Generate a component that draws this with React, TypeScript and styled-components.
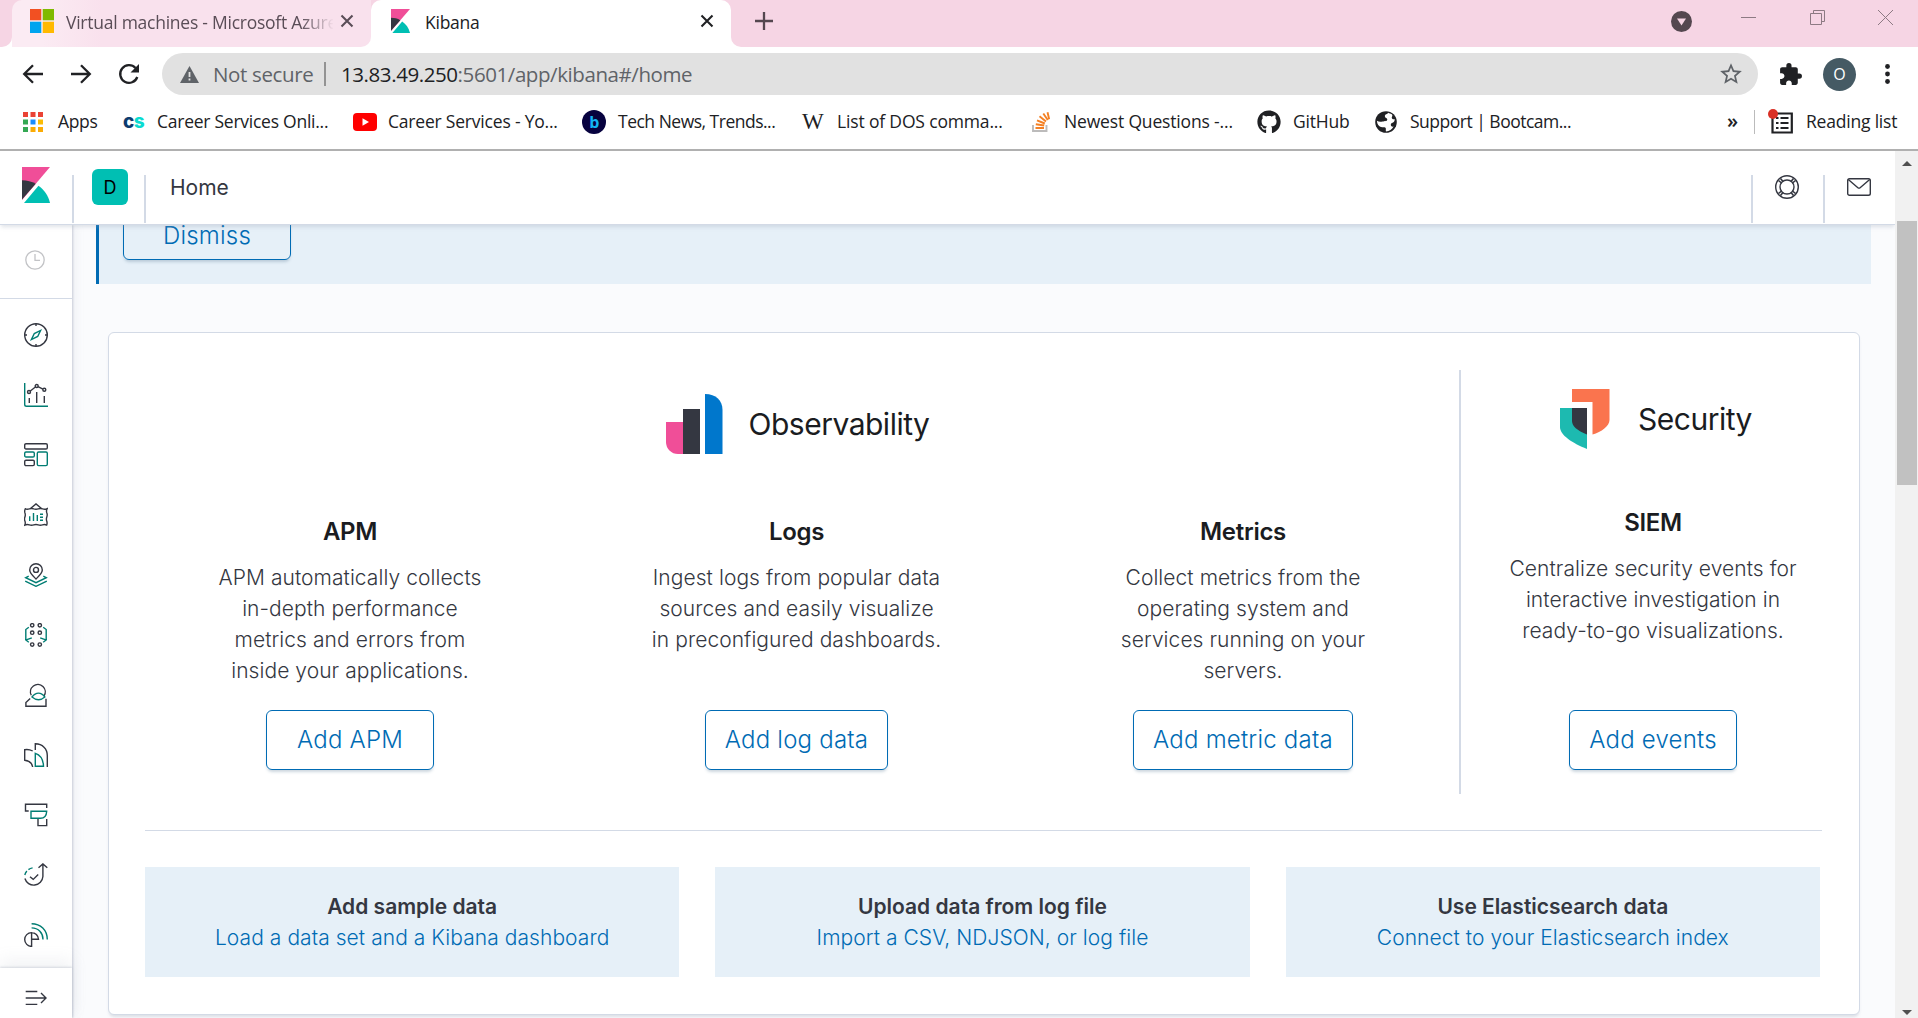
import React from "react";
import styled, { createGlobalStyle } from "styled-components";
import { FaGithub } from "react-icons/fa";
import { MdExtension, MdStarBorder } from "react-icons/md";

const INK = "#343741";
const TEAL = "#017d73";
const BLUE = "#006bb4";
const LINE = "#d3dae6";

const Global = createGlobalStyle`
  * { box-sizing: border-box; }
  body { margin: 0; overflow: hidden; background: #fff; }
  svg { display: block; flex: none; }
`;

const Screen = styled.div`
  width: 1918px;
  height: 1018px;
  display: flex;
  flex-direction: column;
  overflow: hidden;
  font-family: Inter, "Liberation Sans", sans-serif;
  color: ${INK};
`;

/* ---------- Browser chrome ---------- */

const Chrome = styled.div`
  flex: none;
  height: 151px;
  background: #fff;
  border-bottom: 2px solid #b0b0b0;
  font-family: "Open Sans", "Noto Sans", sans-serif;
  color: #202124;
`;

const TabStrip = styled.div`
  display: flex;
  height: 47px;
  background: linear-gradient(#f6d5e4 50%, #fff 50%);
`;

const StripStart = styled.div`
  width: 12px;
  background: #f6d5e4;
  border-radius: 0 0 10px 0;
`;

const Tab = styled.div<{ $active?: boolean }>`
  display: flex;
  align-items: center;
  width: ${(p) => (p.$active ? 360 : 359)}px;
  height: 47px;
  padding: 0 17px 5px ${(p) => (p.$active ? 20 : 18)}px;
  background: ${(p) => (p.$active ? "#fff" : "linear-gradient(90deg, #fbebf3 0, #fbebf3 30px, #f9e1ed 90px)")};
  border-radius: ${(p) => (p.$active ? "10px 10px 0 0" : "10px 0 10px 0")};
  font-size: 17.5px;
  letter-spacing: -0.25px;
`;

const TabTitle = styled.span<{ $faded?: boolean }>`
  flex: 1;
  min-width: 0;
  overflow: hidden;
  white-space: nowrap;
  padding-top: 1px;
  margin: 0 ${(p) => (p.$faded ? 7 : 9)}px 0 ${(p) => (p.$faded ? 12 : 15)}px;
  color: ${(p) => (p.$faded ? "#5a4d57" : "#202124")};
  ${(p) => p.$faded && "mask-image: linear-gradient(90deg, #000 235px, transparent 268px);"}
`;

const StripControls = styled.div`
  display: flex;
  align-items: center;
  flex: 1;
  padding: 0 25px 5px 24px;
  background: #f6d5e4;
  border-radius: 0 0 0 10px;
`;

const WindowButtons = styled.div`
  display: flex;
  align-items: center;
  gap: 53.5px;
  margin-left: auto;
  > :first-child { margin-right: -4px; }
`;

const Toolbar = styled.div`
  display: flex;
  align-items: center;
  height: 54px;
  padding: 0 28px 0 21px;
`;

const NavButtons = styled.div`
  display: flex;
  gap: 24px;
  width: 141px;
`;

const Omnibox = styled.div`
  display: flex;
  align-items: center;
  width: 1596px;
  height: 42px;
  padding: 0 14px 0 18px;
  border-radius: 21px;
  background: #e1e1e1;
  font-size: 20.5px;
  color: #5f6368;
  white-space: nowrap;
`;

const Security = styled.span`
  width: 111px;
  margin-left: 14px;
  letter-spacing: -0.35px;
`;

const BarDivider = styled.i<{ $tone?: string }>`
  flex: none;
  width: ${(p) => (p.$tone ? 1 : 2)}px;
  height: 24px;
  background: ${(p) => p.$tone ?? "#939393"};
`;

const Url = styled.span`
  flex: 1;
  margin-left: 15px;
  letter-spacing: -0.42px;
  b { font-weight: 400; color: #202124; }
`;

const ToolbarEnd = styled.div`
  display: flex;
  align-items: center;
  margin-left: auto;
`;

const Profile = styled.div`
  display: grid;
  place-items: center;
  width: 33px;
  height: 33px;
  margin: 0 29px 0 20px;
  border-radius: 50%;
  background: #455a64;
  color: #fff;
  font-size: 16px;
`;

const Bookmarks = styled.div`
  display: flex;
  align-items: center;
  height: 42px;
  padding-left: 1px;
  font-size: 17.5px;
  letter-spacing: -0.33px;
  white-space: nowrap;
`;

const Bookmark = styled.div<{ $width: number; $pad: number; $slot: number; $track?: number }>`
  display: flex;
  align-items: center;
  flex: none;
  width: ${(p) => p.$width}px;
  padding: 0 0 2px ${(p) => p.$pad}px;
  letter-spacing: ${(p) => p.$track ?? -0.33}px;
  svg, em { flex: none; }
  > :first-child { margin-right: ${(p) => p.$slot}px; margin-top: 1px; }
`;

const CsMark = styled.em`
  width: 22px;
  font: 800 19px/20px Inter, sans-serif;
  letter-spacing: -0.5px;
  color: #0b3c6f;
  b { font-weight: 800; color: #0adbd0; }
`;

const WMark = styled.em`
  width: 23px;
  font: 400 23px/20px "Liberation Serif", serif;
  letter-spacing: 0;
`;

const Dot = styled.em`
  display: grid;
  place-items: center;
  width: 24px;
  height: 24px;
  border-radius: 50%;
  background: #07023f;
  color: #12b5f5;
  font: 700 16px/20px "Open Sans", sans-serif;
`;

const More = styled.span`
  flex: none;
  margin-left: 135px;
  width: 27px;
  padding-bottom: 4px;
  font-size: 20px;
  font-weight: 600;
`;

/* ---------- Application shell ---------- */

const Viewport = styled.div`
  display: flex;
  flex: 1;
  min-height: 0;
`;

const Application = styled.div`
  display: flex;
  flex-direction: column;
  width: 1895px;
  overflow: hidden;
`;

const Header = styled.header`
  position: relative;
  z-index: 3;
  display: flex;
  flex: none;
  align-items: flex-start;
  height: 74px;
  background: #fff;
  border-bottom: 1px solid ${LINE};
  box-shadow: 0 3px 4px -1px rgba(152, 162, 179, 0.3);
`;

const LogoCell = styled.div`
  width: 72px;
  padding: 16px 0 0 22px;
`;

const HeaderCell = styled.div<{ $pad?: number }>`
  width: 72px;
  height: 48px;
  margin-top: 24px;
  padding-left: ${(p) => p.$pad ?? 22}px;
  border-left: 2px solid ${LINE};
`;

const SpaceAvatar = styled.div`
  display: grid;
  place-items: center;
  width: 36px;
  height: 36px;
  margin-top: -6px;
  border-radius: 6px;
  background: #00bfb3;
  color: #000;
  font-size: 18px;
`;

const Crumb = styled.div`
  flex: 1;
  height: 48px;
  margin-top: 24px;
  padding-left: 24px;
  border-left: 2px solid ${LINE};
  font-size: 21px;
  line-height: 25px;
`;

const Body = styled.div`
  display: flex;
  flex: 1;
  min-height: 0;
`;

const SideNav = styled.nav`
  z-index: 2;
  display: flex;
  flex-direction: column;
  width: 72px;
  background: #fff;
  box-shadow: 1px 0 2px rgba(152, 162, 179, 0.45), 2px 0 10px rgba(152, 162, 179, 0.15);
`;

const RecentCell = styled.div`
  flex: none;
  height: 74px;
  padding: 25px 0 0 25px;
  border-bottom: 1px solid ${LINE};
`;

const NavList = styled.div`
  display: flex;
  flex-direction: column;
  gap: 36px;
  flex: 1;
  min-height: 0;
  padding: 24px 0 0 24px;
`;

const NavFooter = styled.div`
  flex: none;
  height: 50px;
  padding: 18px 0 0 24px;
  background: #fff;
  box-shadow: 0 -1px 2px rgba(152, 162, 179, 0.35), 0 -8px 16px rgba(152, 162, 179, 0.13);
`;

const Main = styled.main`
  flex: 1;
  background: #fafbfd;
  padding-left: 24px;
`;

const Callout = styled.section`
  width: 1775px;
  height: 59px;
  padding-left: 24px;
  overflow: hidden;
  border-left: 3px solid ${BLUE};
  background: #e6f0f8;
`;

const Button = styled.button<{ $width: number; $height?: number; $raise?: number }>`
  display: block;
  width: ${(p) => p.$width}px;
  height: ${(p) => p.$height ?? 60}px;
  margin-top: ${(p) => -(p.$raise ?? 0)}px;
  padding: 0;
  border: 1px solid ${BLUE};
  border-radius: 6px;
  background: transparent;
  box-shadow: 0 3px 3px -1px rgba(54, 97, 126, 0.25);
  color: ${BLUE};
  font: 350 24px/${(p) => (p.$height ?? 60) - 4}px Inter, sans-serif;
  letter-spacing: 0.22px;
`;

const Panel = styled.section`
  width: 1752px;
  height: 683px;
  margin: 48px 0 0 12px;
  padding: 37px 37px 0 36px;
  border: 1px solid ${LINE};
  border-radius: 6px;
  background: #fff;
  box-shadow: 0 3px 3px -1px rgba(152, 162, 179, 0.3);
`;

const Solutions = styled.div`
  display: flex;
  height: 424px;
`;

const Observability = styled.div`
  display: flex;
  flex-direction: column;
  width: 1303px;
  margin-right: 11px;
  padding: 24px 0;
`;

const SecurityColumn = styled.div`
  display: flex;
  flex-direction: column;
  flex: 1;
  padding: 19px 0 24px 23px;
  border-left: 2px solid ${LINE};
`;

const SolutionTitle = styled.h2<{ $gap: number; $below: number; $shift: number }>`
  display: flex;
  justify-content: center;
  align-items: center;
  gap: ${(p) => p.$gap}px;
  height: 60px;
  margin: 0 0 ${(p) => p.$below}px;
  padding-left: ${(p) => p.$shift}px;
  color: #1a1c21;
  font-size: 30px;
  font-weight: 400;
  letter-spacing: -0.5px;
`;

const Products = styled.div`
  display: grid;
  grid-template-columns: repeat(3, 1fr);
  gap: 36.5px;
  flex: 1;
`;

const Product = styled.article`
  display: flex;
  flex: 1;
  flex-direction: column;
  align-items: center;
  justify-content: space-between;
  text-align: center;
`;

const ProductName = styled.h3`
  margin: 0 0 15px;
  color: #1a1c21;
  font-size: 24px;
  font-weight: 600;
  line-height: 30px;
  letter-spacing: -0.3px;
`;

const Description = styled.p`
  margin: 0;
  font-size: 21px;
  font-weight: 320;
  line-height: 31px;
  letter-spacing: 0.06px;
  white-space: pre-line;
`;

const Rule = styled.hr`
  height: 1px;
  margin: 36px 0;
  border: 0;
  background: ${LINE};
`;

const Cards = styled.div`
  display: grid;
  grid-template-columns: repeat(3, 1fr);
  gap: 36px;
  width: 1675px;
`;

const Card = styled.div`
  height: 110px;
  padding-top: 24px;
  background: #e6f0f8;
  font-size: 21px;
  line-height: 31px;
  text-align: center;
`;

const CardTitle = styled.div`
  font-weight: 600;
`;

const CardLink = styled.div`
  color: ${BLUE};
  font-weight: 330;
  letter-spacing: 0.06px;
`;

const Scrollbar = styled.div`
  display: flex;
  flex-direction: column;
  justify-content: space-between;
  width: 23px;
  padding: 10px 1px 3px 2px;
  background: #f1f1f1;
`;

const Thumb = styled.div`
  height: 264px;
  margin: 55px 0 auto;
  background: #c1c1c1;
`;

const Arrow = styled.i<{ $down?: boolean }>`
  width: 0;
  height: 0;
  margin-left: 5px;
  border: 5px solid transparent;
  border-top-width: ${(p) => (p.$down ? 5 : 0)}px;
  border-bottom-width: ${(p) => (p.$down ? 0 : 5)}px;
  border-top-color: #505050;
  border-bottom-color: #505050;
`;

/* ---------- Drawings ---------- */

const Glyph = ({ children, size = 24 }: { children: React.ReactNode; size?: number }) => (
  <svg width={size} height={size} viewBox="0 0 24 24" fill="none" stroke={INK} strokeWidth="1.4">
    {children}
  </svg>
);

const KibanaMark = ({ w, h }: { w: number; h: number }) => (
  <svg width={w} height={h} viewBox="0 0 28 36" preserveAspectRatio="none">
    <path d="M0 0H28L0 33Z" fill="#f04e98" />
    <path d="M0 13.2c5 0 9.700 1.200 13.700 3.500L0 32.500Z" fill="#343741" />
    <path d="M16.500 18.700C22 22.400 26.400 28.600 28 36H2Z" fill="#00bfb3" />
  </svg>
);

const Cross = ({ color }: { color: string }) => (
  <svg width="14" height="14" viewBox="0 0 14 14" stroke={color} strokeWidth="2.1">
    <path d="M1.500 1.500 12.500 12.500M12.500 1.500 1.500 12.500" />
  </svg>
);

const NAV_ICONS: React.ReactNode[] = [
  <>
    <circle cx="12" cy="12" r="11.300" />
    <path d="M12 .5V3M12 21v2.500M.5 12H3M21 12h2.500" />
    <path d="M16.600 7.400 13.700 13.500 7.400 16.600 10.300 10.500Z" stroke={TEAL} />
  </>,
  <>
    <path d="M.7 0V21.500a1.800 1.800 0 0 0 1.800 1.800H24" stroke={TEAL} />
    <circle cx="5" cy="9" r="1.500" />
    <circle cx="12.700" cy="3" r="1.500" />
    <circle cx="20.300" cy="6.700" r="1.500" />
    <path d="M6.300 8 11.400 4M14 3.700l4.900 2.400M5.300 15v5M12.700 9v11M20.300 13v7" />
  </>,
  <>
    <rect x=".7" y=".7" width="22.600" height="5.300" rx="1.300" />
    <rect x=".7" y="9" width="9.600" height="5" rx="1.300" stroke={TEAL} />
    <rect x=".7" y="17.300" width="9.600" height="5.300" rx="1.300" />
    <rect x="13.300" y="9" width="10" height="13.600" rx="1.300" stroke={TEAL} />
  </>,
  <>
    <path d="M6.500 5.500 12 .9l5.500 4.600" />
    <path d="M.8 5.600q2.200 1.200 4.500.3 2.300-.9 4.500 0 2.200.8 4.400 0 2.300-.8 4.500 0 2.300.8 4.500-.3-1.200 2-.4 4.200.8 2 0 4.200-.8 2.200 0 4.200.6 2-.1 3.900-2-1-4.200-.2-2.200.8-4.300 0-2.200-.8-4.400 0-2.300.8-4.500 0-2.200-.8-4.500.2.900-2 .1-4-.8-2.100 0-4.200.8-2 0-4.100-.6-2 .4-4Z" />
    <path d="M5.700 13.300V18M9.500 10v8M13.300 12v6M16 11.200h3M16 14.200h3M16 17.200h3" stroke={TEAL} />
  </>,
  <>
    <path d="M12 16C8.500 12.500 5.700 10 5.700 7a6.300 6.300 0 0 1 12.600 0C18.300 10 15.500 12.500 12 16Z" />
    <circle cx="12" cy="6.900" r="2.500" />
    <path d="M4.700 13.200 1.700 14.700 12 19.700l10.300-5-3-1.500M1.200 18.200 12 23.300l10.800-5.100" stroke={TEAL} />
  </>,
  <>
    {[2.3, 9.7, 21.6].map((y) =>
      [8.2, 15.8].map((x) => <circle key={`${x}-${y}`} cx={x} cy={y} r="1.700" />),
    )}
    <path
      d="M4.800 4.300 1.800 6.500V17l3 2.200M1.500 17.200l6.300-2.400M19.200 4.300l3 2.200V17l-3 2.200M22.500 17.200l-6.300-2.400"
      stroke={TEAL}
    />
  </>,
  <>
    <path d="M7.300 12.300A7.400 7.400 0 1 1 20 13M6.200 15.500 1.900 19.600v3.700H22v-7.500" />
    <path d="M8 14q3-3.900 6.500-3.900T20.800 14q-3 2.700-6.300 2.700T8 14Z" stroke={TEAL} />
  </>,
  <>
    <path d="M8.700 8A13 13 0 0 0 .7 6.700V17.200c4 .5 7.400 3 8 6.800M11.300 7V.8C18.500 1 23.300 5.600 23.300 12.500V24" />
    <path d="M11.300 10.300c5.200 1.700 8 6.500 8.200 13H11.300Z" stroke={TEAL} />
  </>,
  <>
    <path d="M4.700 8H1.500V1.300H22.700V5M14 16v6.600h8.700V16" />
    <path d="M7 8.200h15.700c-.2 4.200-2 7-6.200 7H7Z" stroke={TEAL} />
  </>,
  <>
    <path d="M14.500 4.800 18.900.9l4.400 3.900M18.900 1v12.500A9.200 9.200 0 0 1 .9 15.500M6 13.700l3.200 2.700 5-5" />
    <path d="M.8 12a9.500 9.500 0 0 1 9.200-7.200" stroke={TEAL} strokeDasharray="4.500 2" />
  </>,
  <>
    <path d="M7.600 9.600a6.900 6.900 0 1 0 0 13.800ZM7.600 9.600a6.900 6.900 0 0 1 6.900 6.600H7.600" />
    <path d="M7.600 4.900C14.500 5 19 10 19 16.500M7.600.7C16.500.7 23.300 7 23.300 16.500" stroke={TEAL} />
  </>,
];

const PRODUCTS = [
  {
    name: "APM",
    text: "APM automatically collects\nin-depth performance\nmetrics and errors from\ninside your applications.",
    action: "Add APM",
    width: 168,
  },
  {
    name: "Logs",
    text: "Ingest logs from popular data\nsources and easily visualize\nin preconfigured dashboards.",
    action: "Add log data",
    width: 183,
  },
  {
    name: "Metrics",
    text: "Collect metrics from the\noperating system and\nservices running on your\nservers.",
    action: "Add metric data",
    width: 220,
  },
];

const CARDS = [
  ["Add sample data", "Load a data set and a Kibana dashboard"],
  ["Upload data from log file", "Import a CSV, NDJSON, or log file"],
  ["Use Elasticsearch data", "Connect to your Elasticsearch index"],
];

const APP_COLORS = ["#ea4335", "#ea4335", "#ea4335", "#34a853", "#1a8cff", "#fbbc04", "#34a853", "#fbab04", "#fbab04"];

function BrowserChrome() {
  return (
    <Chrome>
      <TabStrip>
        <StripStart />
        <Tab>
          <svg width="24" height="24" viewBox="0 0 24 24">
            <path d="M0 0h11.300v11.300H0z" fill="#f25022" />
            <path d="M12.700 0H24v11.300H12.700z" fill="#7fba00" />
            <path d="M0 12.700h11.300V24H0z" fill="#00a4ef" />
            <path d="M12.700 12.700H24V24H12.700z" fill="#ffb900" />
          </svg>
          <TabTitle $faded>Virtual machines - Microsoft Azure</TabTitle>
          <Cross color="#5a4d57" />
        </Tab>
        <Tab $active>
          <KibanaMark w={19} h={24} />
          <TabTitle>Kibana</TabTitle>
          <Cross color="#202124" />
        </Tab>
        <StripControls>
          <svg width="18" height="18" viewBox="0 0 18 18" stroke="#54474f" strokeWidth="2.300">
            <path d="M9 0v18M0 9h18" />
          </svg>
          <WindowButtons>
            <svg width="21" height="21" viewBox="0 0 21 21">
              <circle cx="10.500" cy="10.500" r="10.500" fill="#54474f" />
              <path d="M6 7.500h9l-4.500 7Z" fill="#f6d5e4" />
            </svg>
            <svg width="15" height="15" viewBox="0 0 15 15" stroke="#8d7a83">
              <path d="M0 3.500h15" />
            </svg>
            <svg width="15" height="23" viewBox="0 0 15 23" fill="none" stroke="#8d7a83">
              <path d="M.5 3.500h11v11H.5zM3.500 3.500v-3h11v11h-3" />
            </svg>
            <svg width="15" height="23" viewBox="0 0 15 23" stroke="#8d7a83">
              <path d="M0 0l15 15M15 0 0 15" />
            </svg>
          </WindowButtons>
        </StripControls>
      </TabStrip>
      <Toolbar>
        <NavButtons>
          <Glyph><path d="M22 12H3.500M12 3.200 3.200 12l8.800 8.800" strokeWidth="2.300" stroke="#202124" /></Glyph>
          <Glyph><path d="M2 12h18.500M12 3.200l8.800 8.800-8.800 8.800" strokeWidth="2.300" stroke="#202124" /></Glyph>
          <Glyph>
            <path d="M20.300 15A8.800 8.800 0 1 1 18.500 6" strokeWidth="2.300" stroke="#202124" />
            <path d="M22 2v8.500h-8.500Z" fill="#202124" stroke="none" />
          </Glyph>
        </NavButtons>
        <Omnibox>
          <svg width="19" height="17" viewBox="0 0 19 17">
            <path d="M9.500 0 19 17H0Z" fill="#5f6368" />
            <path d="M8.600 6h1.800v5H8.600zM8.600 12.500h1.800v2H8.600z" fill="#e1e1e1" />
          </svg>
          <Security>Not secure</Security>
          <BarDivider />
          <Url><b>13.83.49.250</b>:5601/app/kibana#/home</Url>
          <MdStarBorder size={26} color="#5f6368" />
        </Omnibox>
        <ToolbarEnd>
          <MdExtension size={25} color="#202124" />
          <Profile>O</Profile>
          <svg width="5" height="20" viewBox="0 0 5 20" fill="#202124">
            <circle cx="2.500" cy="2.500" r="2.400" />
            <circle cx="2.500" cy="10" r="2.400" />
            <circle cx="2.500" cy="17.500" r="2.400" />
          </svg>
        </ToolbarEnd>
      </Toolbar>
      <Bookmarks>
        <Bookmark $width={100} $pad={22} $slot={15}>
          <svg width="20" height="20" viewBox="0 0 20 20">
            {APP_COLORS.map((c, i) => (
              <rect key={i} x={(i % 3) * 7.5} y={Math.floor(i / 3) * 7.5} width="5" height="5" fill={c} />
            ))}
          </svg>
          Apps
        </Bookmark>
        <Bookmark $width={230} $pad={22} $slot={12} $track={-0.25}>
          <CsMark>c<b>s</b></CsMark>Career Services Onli...
        </Bookmark>
        <Bookmark $width={230} $pad={22} $slot={11} $track={-0.2}>
          <svg width="24" height="18" viewBox="0 0 24 18">
            <rect width="24" height="18" rx="4" fill="#f00" />
            <path d="M9.500 5.300 16 9l-6.500 3.700Z" fill="#fff" />
          </svg>
          Career Services - Yo...
        </Bookmark>
        <Bookmark $width={220} $pad={21} $slot={12} $track={-0.5}>
          <Dot>b</Dot>Tech News, Trends...
        </Bookmark>
        <Bookmark $width={226} $pad={21} $slot={12} $track={-0.16}>
          <WMark>W</WMark>List of DOS comma...
        </Bookmark>
        <Bookmark $width={230} $pad={25} $slot={14} $track={-0.16}>
          <svg width="18" height="20" viewBox="0 0 18 20" fill="none" strokeWidth="1.900">
            <path d="M1 13v6h13.500v-6" stroke="#bcbbbb" />
            <path d="M3.500 16h8.500M3.800 12.300l8.400 1.200M5 8.300l7.800 3.200M7.500 4.300l6.500 5.200M11.300 1.500l4.500 6.500M15.500.2l1.700 7" stroke="#f48024" />
          </svg>
          Newest Questions -...
        </Bookmark>
        <Bookmark $width={117} $pad={20} $slot={12} $track={-0.2}>
          <FaGithub size={24} />GitHub
        </Bookmark>
        <Bookmark $width={238} $pad={21} $slot={13} $track={-0.5}>
          <svg width="22" height="22" viewBox="0 0 22 22">
            <circle cx="11" cy="11" r="10.800" fill="#202124" />
            <path d="M13.500 1.800c-1 1.500-3.800 1.300-3.600 3.600.1 1.600 2.400 1.300 2.400 3 0 1.900-2.800 1.700-4.700 2-1.800.3-3.600.6-5.700-.6.2 3.600 2 5.600 4 6.300 1.500.5 2.800-.5 4.300.5 1.300.9.200 3 .8 3.800 3.400-.1 6-2 7.600-4.800-2 .3-2.900-.5-2.800-2 .1-1.700 1.600-1.600 2.600-2.400.9-.7 1.300-1.900 1.400-3-1.300.3-2.700.1-3-1.200-.3-1.400.9-1.800.5-3.100-.4-1.200-2.200-.8-3.800-2.100Z" fill="#fff" />
          </svg>
          Support | Bootcam...
        </Bookmark>
        <More>»</More>
        <BarDivider $tone="#bbb" />
        <Bookmark $width={150} $pad={13} $slot={12} $track={-0.2}>
          <svg width="26" height="26" viewBox="0 0 26 26" fill="none" stroke="#202124" strokeWidth="2.200">
            <path d="M4.500 4.500h19.300v19H4.500z" />
            <path d="M8 9h2.500M12.500 9H20.500M8 14h2.500M12.500 14h8M8 19h2.500M12.500 19h8" />
            <circle cx="5" cy="5" r="5" fill="#d93025" stroke="none" />
          </svg>
          Reading list
        </Bookmark>
      </Bookmarks>
    </Chrome>
  );
}

export default function App() {
  return (
    <Screen>
      <Global />
      <BrowserChrome />
      <Viewport>
        <Application>
          <Header>
            <LogoCell><KibanaMark w={28} h={36} /></LogoCell>
            <HeaderCell $pad={18}><SpaceAvatar>D</SpaceAvatar></HeaderCell>
            <Crumb>Home</Crumb>
            <HeaderCell>
              <Glyph>
                <circle cx="12" cy="12" r="11.300" />
                <circle cx="12" cy="12" r="7" />
                <path d="M3.500 5.500 6.500 8M5.500 3.500 8 6.500M20.500 5.500 17.500 8M18.500 3.500 16 6.500M3.500 18.500l3-2.500M5.500 20.500l2.500-3M20.500 18.500l-3-2.500M18.500 20.500l-2.500-3" strokeWidth="1.600" />
              </Glyph>
            </HeaderCell>
            <HeaderCell>
              <Glyph>
                <rect x=".7" y="3.700" width="22.600" height="16.600" rx="1.800" />
                <path d="M1.300 4.500 10.900 12.700q1.100.9 2.200 0L22.700 4.500" />
              </Glyph>
            </HeaderCell>
          </Header>
          <Body>
            <SideNav>
              <RecentCell>
                <svg width="20" height="20" viewBox="0 0 20 20" fill="none" stroke="#c2c3c6" strokeWidth="1.300">
                  <circle cx="10" cy="10" r="9.200" />
                  <path d="M10 4v6.300h5" />
                </svg>
              </RecentCell>
              <NavList>
                {NAV_ICONS.map((icon, i) => <Glyph key={i}>{icon}</Glyph>)}
              </NavList>
              <NavFooter>
                <Glyph>
                  <path d="M1.700 5.500H13.300M1.700 12H22M1.700 18.400H13.300M17 7l5 5-5 5" />
                </Glyph>
              </NavFooter>
            </SideNav>
            <Main>
              <Callout><Button $width={168} $height={48} $raise={13}>Dismiss</Button></Callout>
              <Panel>
                <Solutions>
                  <Observability>
                    <SolutionTitle $gap={26} $below={63} $shift={2}>
                      <svg width="57" height="60" viewBox="0 0 57 60">
                        <path d="M0 28H17V60H12A12 12 0 0 1 0 48Z" fill="#f04e98" />
                        <path d="M17 15H34V60H17Z" fill="#343741" />
                        <path d="M39 0C50 0 56.500 6.500 56.500 16V60H39Z" fill="#0077cc" />
                      </svg>
                      Observability
                    </SolutionTitle>
                    <Products>
                      {PRODUCTS.map((p) => (
                        <Product key={p.name}>
                          <div>
                            <ProductName>{p.name}</ProductName>
                            <Description>{p.text}</Description>
                          </div>
                          <Button $width={p.width}>{p.action}</Button>
                        </Product>
                      ))}
                    </Products>
                  </Observability>
                  <SecurityColumn>
                    <SolutionTitle $gap={28} $below={59} $shift={6}>
                      <svg width="50" height="60" viewBox="0 0 50 60">
                        <path d="M12 0H49.500V31c0 6-8 12-17 14.500V13H12Z" fill="#fa744e" />
                        <path d="M0 19H27V60C12 54 0 46 0 38Z" fill="#1dbab0" />
                        <path d="M12 19H27V45.500C17 41.500 12 37 12 32Z" fill="#343741" />
                      </svg>
                      Security
                    </SolutionTitle>
                    <Product>
                      <div>
                        <ProductName>SIEM</ProductName>
                        <Description>
                          {"Centralize security events for\ninteractive investigation in\nready-to-go visualizations."}
                        </Description>
                      </div>
                      <Button $width={168}>Add events</Button>
                    </Product>
                  </SecurityColumn>
                </Solutions>
                <Rule />
                <Cards>
                  {CARDS.map(([title, link]) => (
                    <Card key={title}>
                      <CardTitle>{title}</CardTitle>
                      <CardLink>{link}</CardLink>
                    </Card>
                  ))}
                </Cards>
              </Panel>
            </Main>
          </Body>
        </Application>
        <Scrollbar>
          <Arrow />
          <Thumb />
          <Arrow $down />
        </Scrollbar>
      </Viewport>
    </Screen>
  );
}
